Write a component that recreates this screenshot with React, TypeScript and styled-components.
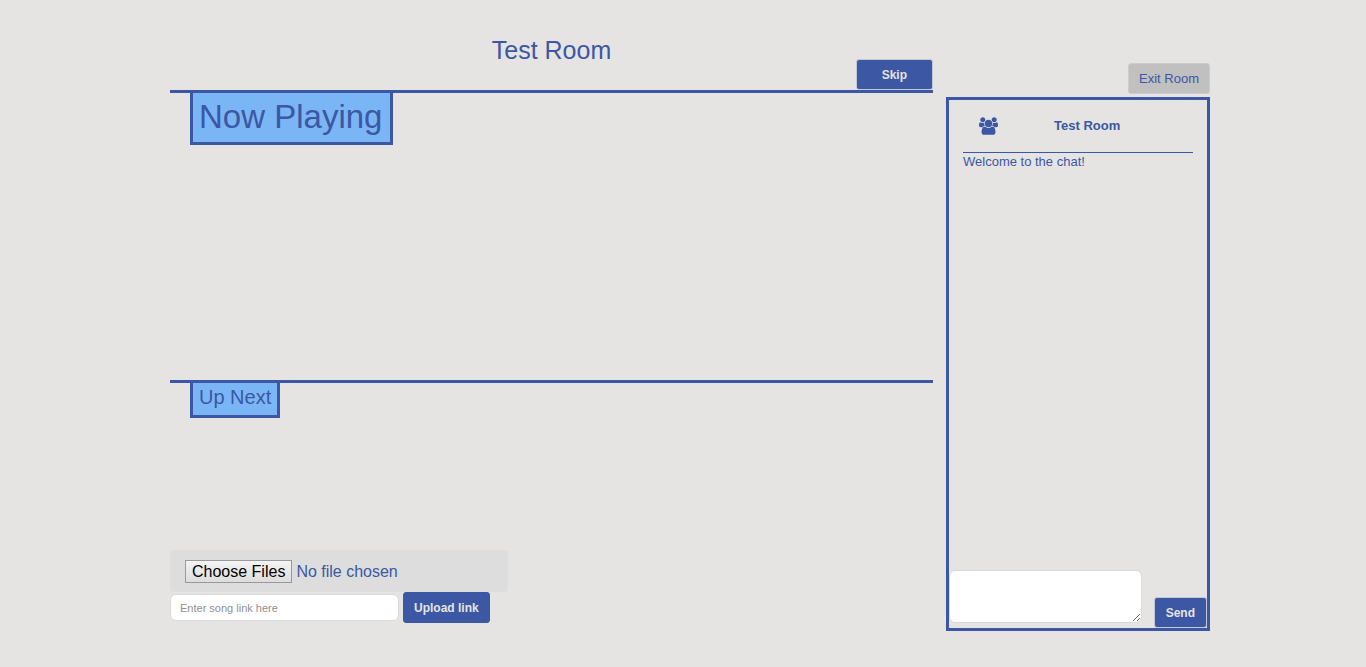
import React from "react";
import styled, { createGlobalStyle } from "styled-components";

const blue = "#3c57a3";

const GlobalStyle = createGlobalStyle`
  *, *::before, *::after { box-sizing: border-box; }
  body {
    margin: 0;
    background: #e5e4e2;
    color: ${blue};
    font: 13px/18px "Liberation Sans", Arial, sans-serif;
  }
`;

const Page = styled.div`
  display: grid;
  grid-template-columns: minmax(0, 1fr) 264px;
  column-gap: 13px;
  padding: 0 156px 36px 170px;
`;

const Main = styled.main`
  display: flex;
  flex-direction: column;
`;

const Header = styled.header`
  display: grid;
  grid-template-columns: 1fr auto 1fr;
  align-items: end;
  padding-top: 34px;
`;

const RoomTitle = styled.h1`
  grid-column: 2;
  margin: 0 0 24px;
  font-size: 25px;
  line-height: 32px;
  font-weight: 400;
`;

const looks = {
  primary: { edge: "#c3c8d6", fill: blue, text: "#e5e4e2", size: 12, weight: 700 },
  flat: { edge: blue, fill: blue, text: "#e5e4e2", size: 12, weight: 700 },
  muted: { edge: "#cccccc", fill: "#c0c0c0", text: blue, size: 13, weight: 400 },
};

const Button = styled.button<{ $look?: keyof typeof looks; $pad?: number }>`
  height: 31px;
  padding: 0 ${(p) => p.$pad ?? 10}px;
  border: 1px solid ${(p) => looks[p.$look ?? "primary"].edge};
  border-radius: 3px;
  background: ${(p) => looks[p.$look ?? "primary"].fill};
  color: ${(p) => looks[p.$look ?? "primary"].text};
  font-family: inherit;
  font-size: ${(p) => looks[p.$look ?? "primary"].size}px;
  line-height: 18px;
  font-weight: ${(p) => looks[p.$look ?? "primary"].weight};
  white-space: nowrap;
  cursor: pointer;
`;

const HeaderAction = styled.div`
  display: flex;
  justify-content: flex-end;
`;

const Section = styled.section<{ $min: number }>`
  min-height: ${(p) => p.$min}px;
  padding-left: 20px;
  border-top: 3px solid ${blue};
`;

const Tag = styled.h2<{ $large?: boolean }>`
  width: fit-content;
  margin: 0;
  padding: ${(p) => (p.$large ? "0 8px 2px 6px" : "0 6px 4px")};
  border: 3px solid ${blue};
  border-top: 0;
  background: #7ab6f6;
  font-size: ${(p) => (p.$large ? 33 : 20)}px;
  line-height: ${(p) => (p.$large ? 47 : 28)}px;
  font-weight: 400;
`;

const FileInput = styled.input`
  display: block;
  width: 338px;
  max-width: 100%;
  height: 42px;
  padding: 10px 15px;
  border-radius: 4px;
  background: #dddddd;
  color: ${blue};
  font-family: inherit;
  font-size: 16px;
  line-height: 21px;

  &::file-selector-button {
    height: 23px;
    margin: 0 4px 0 0;
    padding: 0 6px;
    border: 1px solid #999999;
    border-radius: 0;
    background: linear-gradient(#f4f4f4, #dddddd);
    color: #000000;
    font-family: inherit;
    font-size: 16px;
    line-height: 21px;
  }
`;

const LinkForm = styled.form`
  display: flex;
  align-items: center;
  gap: 4px;
`;

const LinkInput = styled.input`
  width: 229px;
  height: 27px;
  padding: 0 9px;
  border: 1px solid #d9d9d9;
  border-radius: 6px;
  background: #ffffff;
  color: ${blue};
  font-family: inherit;
  font-size: 11px;

  &::placeholder { color: #8f8f8f; opacity: 1; }
`;

const Side = styled.aside`
  display: flex;
  flex-direction: column;
  align-items: flex-end;
  gap: 3px;
  padding-top: 63px;
`;

const Chat = styled.section`
  display: flex;
  flex: 1;
  flex-direction: column;
  width: 100%;
  min-height: 534px;
  border: 3px solid ${blue};
`;

const ChatHeader = styled.header`
  display: flex;
  align-items: center;
  gap: 56px;
  height: 53px;
  margin: 0 14px;
  padding-left: 16px;
  border-bottom: 1px solid ${blue};
`;

const ChatTitle = styled.h2`
  margin: 0;
  font-size: 13px;
  line-height: 18px;
  font-weight: 700;
`;

const Messages = styled.div`
  flex: 1;
  padding: 0 14px;
`;

const Message = styled.p`
  margin: 0;
`;

const Composer = styled.form`
  display: flex;
  align-items: flex-end;
  justify-content: space-between;
`;

const MessageBox = styled.textarea`
  width: 193px;
  height: 53px;
  margin-bottom: 5px;
  padding: 6px 9px;
  border: 1px solid #d9d9d9;
  border-radius: 6px;
  background: #ffffff;
  color: ${blue};
  font: inherit;
  resize: both;
`;

const UsersIcon = () => (
  <svg width="19" height="18" viewBox="0 0 1920 1792" fill={blue} aria-hidden="true">
    <path d="M593 896q-162 5-265 128h-134q-82 0-138-40.500t-56-118.500q0-353 124-353 6 0 43.500 21t97.500 42.500 119 21.500q67 0 133-23-5 37-5 66 0 139 81 256zm1071 637q0 120-73 189.500t-194 69.500h-874q-121 0-194-69.500t-73-189.500q0-53 3.500-103.500t14-109 26.500-108.500 43-97.500 62-81 85.500-53.500 111.500-20q10 0 43 21.500t73 48 107 48 135 21.500 135-21.500 107-48 73-48 43-21.500q61 0 111.500 20t85.500 53.500 62 81 43 97.500 26.500 108.500 14 109 3.500 103.500zm-1024-1277q0 106-75 181t-181 75-181-75-75-181 75-181 181-75 181 75 75 181zm704 384q0 159-112.500 271.500t-271.500 112.500-271.500-112.500-112.500-271.500 112.500-271.500 271.500-112.500 271.500 112.500 112.500 271.500zm576 225q0 78-56 118.500t-138 40.500h-134q-103-123-265-128 81-117 81-256 0-29-5-66 66 23 133 23 59 0 119-21.500t97.500-42.500 43.500-21q124 0 124 353zm-128-609q0 106-75 181t-181 75-181-75-75-181 75-181 181-75 181 75 75 181z" />
  </svg>
);

const stop = (e: React.FormEvent) => e.preventDefault();

export default function App() {
  return (
    <>
      <GlobalStyle />
      <Page>
        <Main>
          <Header>
            <RoomTitle>Test Room</RoomTitle>
            <HeaderAction>
              <Button type="button" $pad={25}>Skip</Button>
            </HeaderAction>
          </Header>
          <Section $min={290}>
            <Tag $large>Now Playing</Tag>
          </Section>
          <Section $min={170}>
            <Tag>Up Next</Tag>
          </Section>
          <FileInput type="file" multiple aria-label="Song files" />
          <LinkForm onSubmit={stop}>
            <LinkInput type="text" placeholder="Enter song link here" aria-label="Song link" />
            <Button type="submit" $look="flat">Upload link</Button>
          </LinkForm>
        </Main>
        <Side>
          <Button type="button" $look="muted">Exit Room</Button>
          <Chat>
            <ChatHeader>
              <UsersIcon />
              <ChatTitle>Test Room</ChatTitle>
            </ChatHeader>
            <Messages>
              <Message>Welcome to the chat!</Message>
            </Messages>
            <Composer onSubmit={stop}>
              <MessageBox aria-label="Message" />
              <Button type="submit" $pad={11}>Send</Button>
            </Composer>
          </Chat>
        </Side>
      </Page>
    </>
  );
}
